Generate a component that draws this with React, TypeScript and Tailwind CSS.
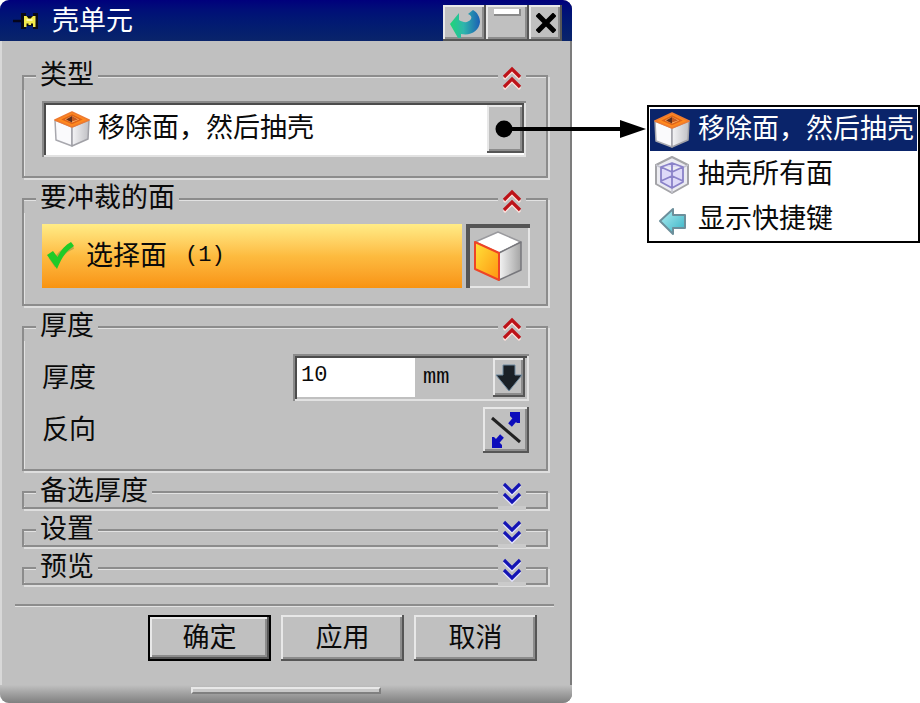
import { useState } from 'react';
import type { ReactNode } from 'react';
import clsx from 'clsx';

const RAISED =
  'bg-[#c0c0c0] shadow-[inset_-2px_-2px_0_#565656,inset_2px_2px_0_#e8e8e8,inset_-4px_-4px_0_#8c8c8c]';
const SUNKEN =
  'shadow-[inset_2px_2px_0_#8a8a8a,inset_-2px_-2px_0_#e2e2e2,inset_4px_4px_0_#4c4c4c]';

function PinIcon() {
  return (
    <svg width="28" height="20" viewBox="0 0 28 20" aria-hidden="true">
      <path d="M1 10H11" stroke="#05051c" strokeWidth="2.500" />
      <path d="M9 2h5v3h7V2h5v16h-5v-3h-7v3H9z" fill="#0b0b16" />
      <path d="M12 5h2.500l2 2.500h2L21 5h2.500v11H21v-3.500h-2V14h-2.500v-1.500h-2V16H12z" fill="#f3ea4c" />
      <path d="M14.500 9h6" stroke="#fff9a8" strokeWidth="2" />
    </svg>
  );
}

function ShellOpenIcon() {
  return (
    <svg width="36" height="38" viewBox="0 0 36 38" aria-hidden="true" className="shrink-0">
      <defs>
        <linearGradient id="shellSide" x1="0" y1="0" x2="1" y2="0">
          <stop offset="0" stopColor="#f4f4f6" />
          <stop offset="1" stopColor="#c0c0c4" />
        </linearGradient>
      </defs>
      <path d="M1 10l17 7v19L2 30z" fill="#fafafc" stroke="#a8a8ae" strokeWidth="1.500" strokeLinejoin="round" />
      <path d="M35 10l-17 7v19l16-7z" fill="url(#shellSide)" stroke="#a0a0a6" strokeWidth="1.500" strokeLinejoin="round" />
      <path d="M18 2l17 8-17 7-17-7z" fill="#ff8a1e" stroke="#ee7a30" strokeWidth="1.500" strokeLinejoin="round" />
      <path d="M18 5l9 4.500-9 4-9-4z" fill="#ffb46c" stroke="#e06418" strokeWidth="1.500" />
      <path d="M18 6v6.500l-6-3z" fill="#63301c" />
      <path d="M18 6l6 3.500-6 2z" fill="#c45a20" />
    </svg>
  );
}

function ShellAllIcon() {
  return (
    <svg width="36" height="38" viewBox="0 0 36 38" aria-hidden="true" className="shrink-0">
      <path d="M18 1l16 8v19l-16 9-16-9V9z" fill="#ececf2" stroke="#a4a4a8" strokeWidth="2" strokeLinejoin="round" />
      <path d="M2 9l16 8 16-8M18 17v20" fill="none" stroke="#c4c4d0" strokeWidth="1.500" />
      <path
        d="M18 7l11 4v15l-11 6-11-6V11zM7 11l11 5 11-5M18 16v16M7 25l11-5 11 5M18 7v13"
        fill="#dedaf8"
        stroke="#8a82c8"
        strokeWidth="1.800"
        strokeLinejoin="round"
      />
    </svg>
  );
}

function ShortcutIcon() {
  return (
    <svg width="36" height="38" viewBox="0 0 36 38" aria-hidden="true" className="shrink-0">
      <defs>
        <linearGradient id="shortcut" x1="0" y1="0" x2="1" y2="1">
          <stop offset="0" stopColor="#b4f0f4" />
          <stop offset="1" stopColor="#35b2c4" />
        </linearGradient>
      </defs>
      <path
        d="M6 20L19 8v6h12v13H19v6z"
        fill="url(#shortcut)"
        stroke="#6c8f9b"
        strokeWidth="2"
        strokeLinejoin="round"
      />
    </svg>
  );
}

function FaceIcon() {
  return (
    <svg width="50" height="52" viewBox="0 0 50 52" aria-hidden="true">
      <defs>
        <linearGradient id="faceFront" x1="0" y1="0" x2="1" y2="1">
          <stop offset="0" stopColor="#ffe23a" />
          <stop offset="1" stopColor="#ff9410" />
        </linearGradient>
        <linearGradient id="faceSide" x1="0" y1="0" x2="1" y2="0">
          <stop offset="0" stopColor="#f4f4f4" />
          <stop offset="1" stopColor="#a4a4a4" />
        </linearGradient>
      </defs>
      <path d="M25 2l23 10-22 11L2 12z" fill="#fff" stroke="#9a9a9e" strokeWidth="1.500" strokeLinejoin="round" />
      <path d="M48 12v28L26 50V23z" fill="url(#faceSide)" stroke="#77777c" strokeWidth="1.500" strokeLinejoin="round" />
      <path d="M2 12l24 11v27L2 39z" fill="url(#faceFront)" stroke="#ee4426" strokeWidth="2" strokeLinejoin="round" />
    </svg>
  );
}

function CheckIcon() {
  return (
    <svg width="30" height="28" viewBox="0 0 30 28" aria-hidden="true" className="shrink-0">
      <path d="M5 14l4 6C14 12 19 7 27 4" fill="none" stroke="#8b8a3c" strokeWidth="6" opacity=".5" />
      <path d="M1 13l6-4 4.500 6C15 8 19 3 25 0l3 4c-8 5-12 11-17 23z" fill="#1fcb27" />
    </svg>
  );
}

function ReverseIcon() {
  return (
    <svg width="36" height="38" viewBox="0 0 36 38" aria-hidden="true">
      <path d="M4 7l28 24" stroke="#222" strokeWidth="3" />
      <path d="M22 14l7-8M14 25l-7 8" stroke="#0d0dbb" strokeWidth="5" />
      <path d="M32 1v11h-3L22 5V1zM4 37V26h2l8 8v3z" fill="#0d0dbb" />
    </svg>
  );
}

function ResetIcon() {
  return (
    <svg width="32" height="29" viewBox="0 0 32 29" aria-hidden="true">
      <defs>
        <linearGradient id="reset" x1="0" y1="0" x2="1" y2="0">
          <stop offset="0" stopColor="#1fd676" />
          <stop offset="0.450" stopColor="#2fb6ac" />
          <stop offset="1" stopColor="#1b5fb4" />
        </linearGradient>
      </defs>
      <path
        d="M1 15L10 4v7c5 3 9 3 12-1 1-2 0-4-3-5l5-4c4 2 7 7 7 12-1 9-9 14-19 12v4H9z"
        fill="url(#reset)"
      />
    </svg>
  );
}

function Chevrons({ up }: { up: boolean }) {
  const d = up ? 'M2 11L10 3l8 8M2 21l8-8 8 8' : 'M2 2l8 8 8-8M2 12l8 8 8-8';
  return (
    <svg width="20" height="24" viewBox="0 0 20 24" aria-hidden="true">
      <path d={d} transform="translate(0 2)" fill="none" stroke={up ? '#ffe2dc' : '#e4e4ff'} strokeWidth="3" />
      <path d={d} fill="none" stroke={up ? '#bd1218' : '#1414b4'} strokeWidth="3.200" />
    </svg>
  );
}

function Rule({ className }: { className: string }) {
  return <span className={clsx('h-[3px] border-t-2 border-b border-t-[#8c8c8c] border-b-[#e2e2e2]', className)} />;
}

interface SectionProps {
  title: string;
  defaultOpen?: boolean;
  children?: ReactNode;
}

function Section({ title, defaultOpen = false, children }: SectionProps) {
  const [open, setOpen] = useState(defaultOpen);

  return (
    <fieldset className="min-w-0 border-2 border-[#8c8c8c] shadow-[2px_2px_0_#dedede,inset_1px_1px_0_#e2e2e2]">
      <legend className="flex h-7 w-full items-center bg-[#c0c0c0]">
        <Rule className="w-3" />
        <span className="px-1 pb-0.5 leading-6">{title}</span>
        <Rule className="flex-1" />
        <button
          type="button"
          aria-expanded={open}
          aria-label={title}
          onClick={() => setOpen(!open)}
          className={clsx(
            'relative flex h-7 w-7 items-end justify-center',
            !open && 'after:absolute after:inset-x-0 after:top-full after:h-1 after:bg-[#cacaca]'
          )}
        >
          <Chevrons up={open} />
        </button>
        <Rule className="w-5" />
      </legend>
      {open && children ? children : <div className="h-px" />}
    </fieldset>
  );
}

// leader line from the drop-down button to its opened list
function Leader() {
  return (
    <svg width="152" height="20" viewBox="0 0 152 20" aria-hidden="true" className="absolute top-3.5 left-2 z-10">
      <circle cx="9" cy="10" r="8.500" />
      <path d="M9 10h120" stroke="#000" strokeWidth="4" />
      <path d="M125 1l26 9-26 9z" />
    </svg>
  );
}

function Dialog() {
  return (
    <form
      onSubmit={(e) => e.preventDefault()}
      className="flex min-w-0 flex-1 flex-col rounded-[9px] border-r-2 border-[#7c7c7c] bg-[#c0c0c0] shadow-[inset_2px_0_0_#d8d8d8]"
    >
      <header className="-mr-0.5 flex h-[41px] items-center rounded-t-[9px] bg-linear-to-b from-[#00007c] to-[#0a246a] pr-2.5 pl-3 text-white">
        <PinIcon />
        <h1 className="flex-1 pl-3">壳单元</h1>
        <div className="flex self-stretch pt-[5px]">
          <button type="button" aria-label="重置" className={clsx('flex w-[43px] items-center justify-center', RAISED)}>
            <ResetIcon />
          </button>
          <button type="button" aria-label="折叠" className={clsx('flex w-[43px] justify-center pt-1', RAISED)}>
            <span className="h-[7px] w-[27px] border-r-2 border-b-2 border-[#8a8a8a] bg-white" />
          </button>
          <button type="button" aria-label="关闭" className={clsx('flex w-[33px] items-center justify-center', RAISED)}>
            <svg width="20" height="20" viewBox="0 0 20 20" aria-hidden="true">
              <path d="M3 3l14 14M17 3L3 17" stroke="#000" strokeWidth="5" strokeLinecap="square" />
            </svg>
          </button>
        </div>
      </header>

      <div className="flex flex-col gap-[7px] px-[22px] pt-[21px]">
        <Section title="类型" defaultOpen>
          <div className="pt-[11px] pr-5 pb-[19px] pl-[18px]">
            <div className={clsx('flex h-14 items-stretch bg-white p-1', SUNKEN)}>
              <label htmlFor="kind" className="flex items-center pl-2">
                <ShellOpenIcon />
              </label>
              <select id="kind" className="min-w-0 flex-1 appearance-none bg-transparent pb-0.5 pl-2 outline-none">
                <option>移除面，然后抽壳</option>
                <option>抽壳所有面</option>
              </select>
              <span className={clsx('relative -mr-0.5 w-[37px]', RAISED)}>
                <Leader />
              </span>
            </div>
          </div>
        </Section>

        <Section title="要冲裁的面" defaultOpen>
          <div className="flex h-[91px] items-start gap-1 pt-[11px] pr-4 pl-[18px]">
            <button
              type="button"
              className="flex h-16 flex-1 items-center bg-linear-to-b from-[#ffec86] via-[#fdbb3f] to-[#f8930f] pl-1 text-left"
            >
              <CheckIcon />
              <span className="pl-2.5">选择面</span>
              <span className="pl-[18px] font-['Liberation_Mono'] text-[22px]">(1)</span>
            </button>
            <button
              type="button"
              aria-label="面"
              className="flex size-16 items-center justify-center shadow-[inset_4px_4px_0_#555,inset_-2px_-2px_0_#e6e6e6]"
            >
              <FaceIcon />
            </button>
          </div>
        </Section>

        <Section title="厚度" defaultOpen>
          <div className="flex flex-col gap-1.5 pt-[13px] pr-[17px] pb-4 pl-[18px]">
            <div className="flex h-[47px] items-center justify-between">
              <label htmlFor="thickness">厚度</label>
              <div className={clsx('flex h-full w-[236px] items-stretch p-1', SUNKEN)}>
                <input
                  id="thickness"
                  defaultValue="10"
                  className="w-[118px] bg-white pb-1 pl-1 font-['Liberation_Mono'] text-[22px] outline-none"
                />
                <span className="flex-1 self-center pl-2 font-['Liberation_Mono'] text-[22px]">mm</span>
                <button type="button" aria-label="选项" className={clsx('flex w-8 items-center justify-center', RAISED)}>
                  <svg width="28" height="28" viewBox="0 0 28 28" aria-hidden="true">
                    <path d="M8 1h12v10h7L14 27 1 11h7z" fill="#1a2026" stroke="#6f8aa0" strokeWidth="1" />
                  </svg>
                </button>
              </div>
            </div>
            <div className="flex h-[46px] items-center justify-between">
              <span>反向</span>
              <button type="button" aria-label="反向" className={clsx('flex size-[46px] items-center justify-center', RAISED)}>
                <ReverseIcon />
              </button>
            </div>
          </div>
        </Section>

        <Section title="备选厚度" />
        <Section title="设置" />
        <Section title="预览" />
      </div>

      <Rule className="mt-[19px] mr-4 ml-[15px]" />

      <div className="flex justify-end gap-2.5 pt-2 pr-[33px]">
        <button type="submit" className={clsx('h-[46px] w-[123px] border-2 border-black', RAISED)}>
          确定
        </button>
        <button type="button" className={clsx('h-[46px] w-[123px]', RAISED)}>
          应用
        </button>
        <button type="button" className={clsx('h-[46px] w-[123px]', RAISED)}>
          取消
        </button>
      </div>

      <footer className="mt-6 -mr-0.5 flex h-[18px] justify-center rounded-b-[9px] bg-linear-to-b from-[#c0c0c0] to-[#808080] pt-0.5">
        <span className="h-[7px] w-1/3 border-2 border-t-[#e8e8e8] border-r-[#808080] border-b-[#808080] border-l-[#e8e8e8] bg-[#c8c8c8]" />
      </footer>
    </form>
  );
}

const MENU_ITEMS = [
  { label: '移除面，然后抽壳', icon: <ShellOpenIcon />, selected: true },
  { label: '抽壳所有面', icon: <ShellAllIcon />, selected: false },
  { label: '显示快捷键', icon: <ShortcutIcon />, selected: false },
];

function TypeMenu() {
  return (
    <ul className="mt-[105px] flex w-[273px] shrink-0 flex-col gap-px border-2 border-black bg-white px-px">
      {MENU_ITEMS.map((item) => (
        <li key={item.label}>
          <button
            type="button"
            className={clsx(
              'flex h-11 w-full items-center gap-2 border-t-2 border-white pl-1 text-left whitespace-nowrap',
              item.selected && 'bg-[#0a246a] text-white'
            )}
          >
            {item.icon}
            <span className="pb-0.5">{item.label}</span>
          </button>
        </li>
      ))}
    </ul>
  );
}

export default function App() {
  return (
    <main className="flex items-start gap-[75px] bg-white font-['Liberation_Sans','Noto_Sans_CJK_SC',sans-serif] text-[27px] leading-7 text-[#0a0a0a]">
      <Dialog />
      <TypeMenu />
    </main>
  );
}
